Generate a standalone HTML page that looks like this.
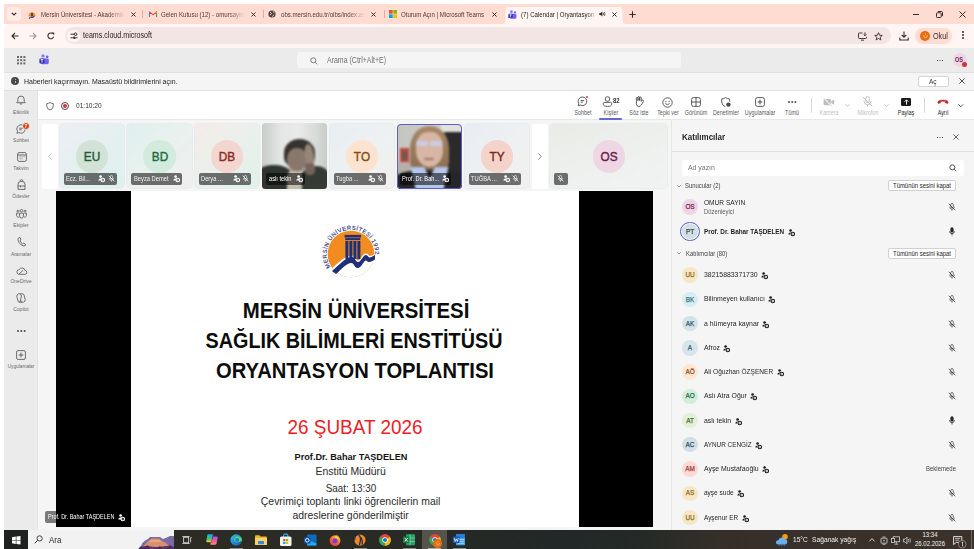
<!DOCTYPE html>
<html><head><meta charset="utf-8">
<style>
*{box-sizing:border-box}
html,body{margin:0;padding:0}
body{width:974px;height:549px;overflow:hidden;position:relative;background:#fff;font-family:"Liberation Sans",sans-serif;color:#242424}
.a{position:absolute}
.t{position:absolute;white-space:nowrap;line-height:0}
svg{position:absolute;overflow:visible}
</style></head><body>

<!-- ============ CHROME TAB STRIP ============ -->
<div class="a" style="left:4px;top:4px;width:970px;height:20px;background:#ffdcd1"></div>
<!-- tab list button -->
<div class="a" style="left:7px;top:7px;width:14px;height:14px;border-radius:4px;background:#ffece7"></div>
<svg style="left:11px;top:12px" width="6" height="4"><path d="M0.8 0.8 L3 3 L5.2 0.8" stroke="#3b2a28" stroke-width="1.2" fill="none"/></svg>


<!-- tab 1 -->
<svg style="left:28px;top:10.5px" width="8" height="8" viewBox="0 0 8 8"><path d="M.4 5.2A3.6 3.6 0 0 1 7.6 5.2z" fill="#f28a1a"/><rect x="3.2" y="1.8" width="1.6" height="3.6" fill="#2a3470"/><path d="M1.2 7.6Q2.4 5.6 3.6 6.2T6.4 5.2" stroke="#2a3470" stroke-width="1.1" fill="none"/></svg>
<div class="t" style="left:40.5px;top:14.8px;font-size:7.09px;color:#4a3b38;width:97.7px;overflow:hidden;height:10px;line-height:10px;margin-top:-5px;-webkit-mask-image:linear-gradient(90deg,#000 80%,transparent);transform:scaleX(0.86);transform-origin:0 0">Mersin Üniversitesi - Akademik</div>
<svg style="left:130.5px;top:11.5px" width="5" height="5"><path d="M0.5 0.5L4.5 4.5M4.5 0.5L0.5 4.5" stroke="#3b2a28" stroke-width="1"/></svg>
<div class="a" style="left:142px;top:10px;width:1px;height:8px;background:#f2a999"></div>
<!-- tab 2 -->
<svg style="left:148.5px;top:11px" width="8" height="6" viewBox="0 0 8 6"><path d="M0.5 6V1L4 3.6L7.5 1V6" fill="none" stroke="#ea4335" stroke-width="1.1"/><path d="M0.5 1.2V6" stroke="#4285f4" stroke-width="1.1"/><path d="M7.5 1.2V6" stroke="#34a853" stroke-width="1.1"/><path d="M6.2 2.2L7.5 1.1" stroke="#fbbc04" stroke-width="1.1"/></svg>
<div class="t" style="left:160.5px;top:14.8px;font-size:7.09px;color:#4a3b38;width:97.7px;overflow:hidden;height:10px;line-height:10px;margin-top:-5px;-webkit-mask-image:linear-gradient(90deg,#000 80%,transparent);transform:scaleX(0.86);transform-origin:0 0">Gelen Kutusu (12) - omursayin@</div>
<svg style="left:251.2px;top:11.5px" width="5" height="5"><path d="M0.5 0.5L4.5 4.5M4.5 0.5L0.5 4.5" stroke="#3b2a28" stroke-width="1"/></svg>
<div class="a" style="left:262.7px;top:10px;width:1px;height:8px;background:#f2a999"></div>
<!-- tab 3 -->
<svg style="left:268px;top:10px" width="8" height="8" viewBox="0 0 8 8"><circle cx="4" cy="4" r="3.6" fill="#4a4040"/><path d="M2 2.2q1.2 .3 1.5 1.5q-.3 1-1.4 1.1M5.2 1.4q.2 1.2 1.3 1.6M4.6 6.8q.1-1.5 1.6-1.9" stroke="#ffdcd1" stroke-width=".9" fill="none"/></svg>
<div class="t" style="left:280.6px;top:14.8px;font-size:7.09px;color:#4a3b38;width:97.7px;overflow:hidden;height:10px;line-height:10px;margin-top:-5px;-webkit-mask-image:linear-gradient(90deg,#000 80%,transparent);transform:scaleX(0.86);transform-origin:0 0">obs.mersin.edu.tr/oibs/index.aspx</div>
<svg style="left:371.1px;top:11.5px" width="5" height="5"><path d="M0.5 0.5L4.5 4.5M4.5 0.5L0.5 4.5" stroke="#3b2a28" stroke-width="1"/></svg>
<div class="a" style="left:383.8px;top:10px;width:1px;height:8px;background:#f2a999"></div>
<!-- tab 4 -->
<svg style="left:388.5px;top:10px" width="8" height="8" viewBox="0 0 8 8"><rect x="0" y="0" width="3.7" height="3.7" fill="#f25022"/><rect x="4.3" y="0" width="3.7" height="3.7" fill="#7fba00"/><rect x="0" y="4.3" width="3.7" height="3.7" fill="#00a4ef"/><rect x="4.3" y="4.3" width="3.7" height="3.7" fill="#ffb900"/></svg>
<div class="t" style="left:400.8px;top:14.8px;font-size:7.09px;color:#4a3b38;transform:scaleX(0.86);transform-origin:0 0">Oturum Açın | Microsoft Teams</div>
<svg style="left:491.5px;top:11.5px" width="5" height="5"><path d="M0.5 0.5L4.5 4.5M4.5 0.5L0.5 4.5" stroke="#3b2a28" stroke-width="1"/></svg>
<!-- active tab 5 -->
<svg style="left:502px;top:7px" width="124" height="17" viewBox="0 0 124 17"><path d="M0 17 Q3.5 17 3.5 13.5 V3.5 Q3.5 0 7 0 H117 Q120.5 0 120.5 3.5 V13.5 Q120.5 17 124 17z" fill="#fff6f3"/></svg>
<svg style="left:508px;top:9.6px" width="9" height="9" viewBox="0 0 10.5 10.5"><circle cx="4" cy="1.9" r="1.7" fill="#8a7cf4"/><circle cx="8.2" cy="2.8" r="1.35" fill="#6a62e8"/><rect x="5.6" y="4.4" width="4.2" height="5.8" rx="1.4" fill="#7d5cf0"/><rect x="2.2" y="4.4" width="5" height="5.8" rx="1.2" fill="#6a6cf0"/><rect x=".4" y="4.4" width="5.2" height="5" rx="1" fill="#3434b4"/><path d="M1.6 5.6h2.8M3 5.6v3" stroke="#fff" stroke-width=".8"/></svg>
<div class="t" style="left:521.3px;top:14.8px;font-size:7.09px;color:#2d2120;width:88.4px;overflow:hidden;height:10px;line-height:10px;margin-top:-5px;-webkit-mask-image:linear-gradient(90deg,#000 88%,transparent);transform:scaleX(0.86);transform-origin:0 0">(7) Calendar | Oryantasyon Toplantısı</div>
<svg style="left:598.5px;top:11px" width="7" height="6" viewBox="0 0 7 6"><path d="M0.3 2h1.3L3.4 0.5v5L1.6 4H0.3z" fill="#3b2a28"/><path d="M4.3 1.8q.7 1.2 0 2.4M5.4 1q1.3 2 0 4" stroke="#3b2a28" stroke-width=".7" fill="none"/></svg>
<svg style="left:611.8px;top:11.5px" width="5" height="5"><path d="M0.5 0.5L4.5 4.5M4.5 0.5L0.5 4.5" stroke="#3b2a28" stroke-width="1"/></svg>
<!-- new tab -->
<svg style="left:629px;top:11px" width="7" height="7"><path d="M3.5 0.3V6.7M0.3 3.5H6.7" stroke="#3b2a28" stroke-width="1.1"/></svg>
<!-- window controls -->
<div class="a" style="left:912.5px;top:13.6px;width:6px;height:1px;background:#3b2a28"></div>
<svg style="left:935.5px;top:10.5px" width="7" height="7" viewBox="0 0 7 7"><rect x="0.5" y="1.8" width="4.7" height="4.7" rx=".8" fill="none" stroke="#3b2a28" stroke-width="1"/><path d="M1.8 0.5h3.7a1 1 0 0 1 1 1v3.7" fill="none" stroke="#3b2a28" stroke-width="1"/></svg>
<svg style="left:959px;top:10.8px" width="7" height="7"><path d="M0.5 0.5L6.5 6.5M6.5 0.5L0.5 6.5" stroke="#3b2a28" stroke-width="1"/></svg>


<!-- ============ CHROME TOOLBAR ============ -->
<div class="a" style="left:4px;top:24px;width:970px;height:24px;background:#fff6f3;border-radius:5px 5px 0 0"></div>


<!-- back / fwd / reload -->
<svg style="left:11px;top:32px" width="8" height="8" viewBox="0 0 8 8"><path d="M7.5 4H1M4 1L1 4L4 7" stroke="#3b2a28" stroke-width="1.1" fill="none"/></svg>
<svg style="left:29px;top:32px" width="8" height="8" viewBox="0 0 8 8"><path d="M0.5 4H7M4 1L7 4L4 7" stroke="#a89896" stroke-width="1.1" fill="none"/></svg>
<svg style="left:47px;top:31.8px" width="8" height="8" viewBox="0 0 8 8"><path d="M6.6 4.6A2.9 2.9 0 1 1 5.6 1.6" stroke="#3b2a28" stroke-width="1.1" fill="none"/><path d="M4.4 0.4H7.2V3.2z" fill="#3b2a28"/></svg>
<!-- omnibox -->
<div class="a" style="left:64.5px;top:27.2px;width:826px;height:17px;border-radius:9px;background:#f2e5e4"></div>
<div class="a" style="left:67px;top:29.5px;width:13px;height:12.7px;border-radius:7px;background:#fff6f3"></div>
<svg style="left:69.5px;top:32px" width="8" height="8" viewBox="0 0 8 8"><path d="M0.5 2.2H4.5M0.5 5.8H2.8" stroke="#3b2a28" stroke-width="1"/><circle cx="5.6" cy="2.2" r="1.3" fill="none" stroke="#3b2a28" stroke-width="1"/><circle cx="4.3" cy="5.8" r="1.3" fill="#3b2a28"/><path d="M5.7 5.8H7.5" stroke="#3b2a28" stroke-width="1"/></svg>
<div class="t" style="left:83px;top:36px;font-size:8.26px;color:#261a19;transform:scaleX(0.86);transform-origin:0 0">teams.cloud.microsoft</div>
<!-- install / star -->
<svg style="left:857.5px;top:31.5px" width="10" height="9" viewBox="0 0 10 9"><path d="M4.5 1H1.2a.7.7 0 0 0-.7.7v4.1a.7.7 0 0 0 .7.7h6.6a.7.7 0 0 0 .7-.7V4.8" fill="none" stroke="#3b2a28" stroke-width=".9"/><path d="M3 8.2h3M7 0.3v3.4M5.6 2.3L7 3.7L8.4 2.3" stroke="#3b2a28" stroke-width=".9" fill="none"/></svg>
<svg style="left:874px;top:31.5px" width="9" height="9" viewBox="0 0 10 10"><path d="M5 0.8L6.2 3.6L9.2 3.8L6.9 5.8L7.6 8.8L5 7.2L2.4 8.8L3.1 5.8L0.8 3.8L3.8 3.6z" fill="none" stroke="#3b2a28" stroke-width="1"/></svg>
<!-- download -->
<svg style="left:899px;top:31px" width="10" height="10" viewBox="0 0 10 10"><path d="M5 0.5V6.2M2.6 3.8L5 6.2L7.4 3.8" stroke="#3b2a28" stroke-width="1.1" fill="none"/><path d="M0.8 6.5V9H9.2V6.5" stroke="#3b2a28" stroke-width="1.1" fill="none"/></svg>
<!-- profile pill -->
<div class="a" style="left:915px;top:27.5px;width:36.7px;height:16.6px;border-radius:9px;background:#fddcd2"></div>
<div class="a" style="left:919.8px;top:30.7px;width:10.2px;height:10.2px;border-radius:50%;background:#e86d0a"></div>
<svg style="left:922.5px;top:32.8px" width="5" height="6" viewBox="0 0 5 6"><path d="M2.5 0.4V1.6M1 2.2A1.7 1.7 0 1 0 4 2.2" stroke="#ffd8c4" stroke-width=".8" fill="none"/></svg>
<div class="t" style="left:932.8px;top:36px;font-size:8.37px;color:#3b2a28;transform:scaleX(0.86);transform-origin:0 0">Okul</div>
<!-- kebab -->
<div class="a" style="left:962px;top:31.2px;width:1.6px;height:1.6px;background:#3b2a28;border-radius:1px;box-shadow:0 3px 0 #3b2a28,0 6px 0 #3b2a28"></div>


<!-- ============ TEAMS HEADER ============ -->
<div class="a" style="left:4px;top:48px;width:970px;height:25px;background:#ebebeb;border-bottom:1px solid #e0e0e0"></div>

<!-- waffle -->
<div class="a" style="left:17.4px;top:56.4px;width:1.3px;height:1.3px;background:#6a6a6a;box-shadow:3.2px 0 #6a6a6a,6.4px 0 #6a6a6a,0 3.2px #6a6a6a,3.2px 3.2px #6a6a6a,6.4px 3.2px #6a6a6a,0 6.4px #6a6a6a,3.2px 6.4px #6a6a6a,6.4px 6.4px #6a6a6a"></div>
<!-- teams logo -->
<svg style="left:38.5px;top:54.3px" width="10.5" height="10.5" viewBox="0 0 10.5 10.5"><circle cx="4" cy="1.9" r="1.7" fill="#8a7cf4"/><circle cx="8.2" cy="2.8" r="1.35" fill="#6a62e8"/><rect x="5.6" y="4.4" width="4.2" height="5.8" rx="1.4" fill="#7d5cf0"/><rect x="2.2" y="4.4" width="5" height="5.8" rx="1.2" fill="#6a6cf0"/><rect x=".4" y="4.4" width="5.2" height="5" rx="1" fill="#3434b4"/><path d="M1.6 5.6h2.8M3 5.6v3" stroke="#fff" stroke-width=".8"/></svg>
<!-- search -->
<div class="a" style="left:296.5px;top:52.3px;width:384px;height:15.5px;border-radius:3px;background:#f5f5f5"></div>
<svg style="left:309.5px;top:56.6px" width="8" height="8" viewBox="0 0 8 8"><circle cx="3.3" cy="3.3" r="2.5" fill="none" stroke="#707070" stroke-width=".9"/><path d="M5.2 5.2L7.3 7.3" stroke="#707070" stroke-width=".9"/></svg>
<div class="t" style="left:326.8px;top:61.1px;font-size:8.14px;color:#707070;transform:scaleX(0.86);transform-origin:0 0">Arama (Ctrl+Alt+E)</div>
<!-- more + avatar -->
<div class="a" style="left:936.5px;top:59.5px;width:1.4px;height:1.4px;background:#424242;box-shadow:2.5px 0 #424242,5px 0 #424242"></div>
<div class="a" style="left:953px;top:53px;width:14px;height:14px;border-radius:50%;background:#eed5e5"></div>
<div class="t" style="left:955.2px;top:60px;font-size:6.51px;font-weight:700;color:#6b1e50;transform:scaleX(0.86);transform-origin:0 0">OS</div>
<div class="a" style="left:962px;top:62px;width:5px;height:5px;border-radius:50%;background:#d13438"></div>


<!-- ============ NOTIFICATION BAR ============ -->
<div class="a" style="left:4px;top:73px;width:970px;height:17.8px;background:#f5f5f5;border-bottom:1.2px solid #e0e0e0"></div>

<div class="a" style="left:11px;top:77.3px;width:8px;height:8px;border-radius:50%;background:#4a4a4a"></div>
<div class="a" style="left:14.6px;top:79.3px;width:1px;height:1px;background:#bbb"></div>
<div class="a" style="left:14.6px;top:80.8px;width:1px;height:2.6px;background:#bbb"></div>
<div class="t" style="left:24.3px;top:81.5px;font-size:8.09px;color:#1f1f1f;transform:scaleX(0.86);transform-origin:0 0">Haberleri kaçırmayın. Masaüstü bildirimlerini açın.</div>
<div class="a" style="left:918px;top:75.7px;width:31px;height:11.5px;border-radius:2px;background:#fff;border:1px solid #d6d6d6"></div>
<div class="t" style="left:929px;top:81.5px;font-size:7.56px;color:#333;transform:scaleX(0.86);transform-origin:0 0">Aç</div>
<svg style="left:958.7px;top:78.4px" width="6" height="6"><path d="M0.4 0.4L5.6 5.6M5.6 0.4L0.4 5.6" stroke="#424242" stroke-width=".9"/></svg>


<!-- ============ LEFT RAIL ============ -->
<div class="a" style="left:4px;top:90.8px;width:34px;height:439.2px;background:#ebebeb;border-right:.6px solid #e2e2e2"></div>

<style>.tc{position:absolute;white-space:nowrap;line-height:0;transform:translateX(-50%)}</style>
<!-- bell -->
<svg style="left:16.3px;top:95px" width="10" height="10" viewBox="0 0 10 10"><path d="M1.8 6.4V4.3a3.2 3.2 0 0 1 6.4 0v2.1L9.3 7.7H.7z" stroke="#5f5f5f" stroke-width=".9" fill="none" stroke-linejoin="round"/><path d="M3.8 8.6q1.2 1.2 2.4 0" stroke="#5f5f5f" stroke-width=".9" fill="none"/></svg>
<div class="tc" style="left:21.3px;top:111.5px;font-size:5.81px;color:#6a6a6a;transform:translateX(-50%) scaleX(0.86)">Etkinlik</div>
<!-- chat -->
<svg style="left:15.8px;top:123.5px" width="11" height="11" viewBox="0 0 11 11"><path d="M5 0.8a4.2 4.2 0 1 1-2.1 7.8L0.9 9.3l.6-2A4.2 4.2 0 0 1 5 .8z" stroke="#5f5f5f" stroke-width=".9" fill="none" stroke-linejoin="round"/><path d="M3.2 4.2h3.6M3.2 5.8h2.4" stroke="#5f5f5f" stroke-width=".9" fill="none"/></svg>
<div class="a" style="left:22.2px;top:121.5px;width:8px;height:8px;border-radius:50%;background:#d83b01;border:.8px solid #ebebeb"></div>
<div class="tc" style="left:26.2px;top:125.7px;font-size:5.81px;font-weight:700;color:#fff;transform:translateX(-50%) scaleX(0.86)">7</div>
<div class="tc" style="left:21px;top:140.2px;font-size:5.81px;color:#6a6a6a;transform:translateX(-50%) scaleX(0.86)">Sohbet</div>
<!-- calendar -->
<svg style="left:16.6px;top:152.4px" width="10" height="10" viewBox="0 0 10 10"><rect x="0.6" y="0.6" width="8.8" height="8.8" rx="1.6" stroke="#5f5f5f" stroke-width=".9" fill="none"/><path d="M0.6 3h8.8" stroke="#5f5f5f" stroke-width=".9" fill="none"/><path d="M2.6 4.8h1M4.6 4.8h1M6.6 4.8h1M2.6 6.8h1M4.6 6.8h1" stroke="#5f5f5f" stroke-width=".8"/></svg>
<div class="tc" style="left:21.3px;top:168.4px;font-size:5.81px;color:#6a6a6a;transform:translateX(-50%) scaleX(0.86)">Takvim</div>
<!-- backpack -->
<svg style="left:16.8px;top:180.2px" width="9" height="10" viewBox="0 0 9 10"><path d="M3 1.6V1.2a1.5 1.5 0 0 1 3 0v.4" stroke="#5f5f5f" stroke-width=".9" fill="none"/><path d="M1 9.4V4.2a2.6 2.6 0 0 1 2.6-2.6h1.8A2.6 2.6 0 0 1 8 4.2v5.2z" stroke="#5f5f5f" stroke-width=".9" fill="none" stroke-linejoin="round"/><path d="M1 6h7M3.5 6v1.3" stroke="#5f5f5f" stroke-width=".9" fill="none"/></svg>
<div class="tc" style="left:21.3px;top:196px;font-size:5.81px;color:#6a6a6a;transform:translateX(-50%) scaleX(0.86)">Ödevler</div>
<!-- teams -->
<svg style="left:15.6px;top:208.8px" width="11" height="10" viewBox="0 0 11 10"><circle cx="5.5" cy="1.6" r="1.2" stroke="#5f5f5f" stroke-width=".9" fill="none"/><circle cx="2" cy="2.2" r="1" stroke="#5f5f5f" stroke-width=".9" fill="none"/><circle cx="9" cy="2.2" r="1" stroke="#5f5f5f" stroke-width=".9" fill="none"/><path d="M3.6 4.2h3.8v3a1.9 1.9 0 0 1-3.8 0z" stroke="#5f5f5f" stroke-width=".9" fill="none"/><path d="M2.6 4.2H.6v2.3a1.6 1.6 0 0 0 2.4 1.4M8.4 4.2h2v2.3A1.6 1.6 0 0 1 8 7.9" stroke="#5f5f5f" stroke-width=".9" fill="none"/></svg>
<div class="tc" style="left:21.3px;top:225.2px;font-size:5.81px;color:#6a6a6a;transform:translateX(-50%) scaleX(0.86)">Ekipler</div>
<!-- phone -->
<svg style="left:16.8px;top:237.2px" width="9" height="10" viewBox="0 0 9 10"><path d="M1.9 0.7L3.2 0.6L4 2.7L3 3.6Q3.6 5.8 5.6 7L6.5 6.2L8.4 7.2L8.3 8.5Q6.8 9.8 4.4 8Q1.6 5.8 1 3Q.9 1.6 1.9 .7z" stroke="#5f5f5f" stroke-width=".9" fill="none" stroke-linejoin="round"/></svg>
<div class="tc" style="left:21.3px;top:253.5px;font-size:5.81px;color:#6a6a6a;transform:translateX(-50%) scaleX(0.86)">Aramalar</div>
<!-- onedrive -->
<svg style="left:15.8px;top:266.8px" width="11" height="8" viewBox="0 0 11 8"><path d="M2.6 7.3h6.2a1.9 1.9 0 0 0 .3-3.8A3.2 3.2 0 0 0 3.2 2.6 2.4 2.4 0 0 0 2.6 7.3z" stroke="#5f5f5f" stroke-width=".9" fill="none" stroke-linejoin="round"/><path d="M3.2 6.8l4-3.6" stroke="#5f5f5f" stroke-width=".9" fill="none"/></svg>
<div class="tc" style="left:21.3px;top:280.6px;font-size:5.81px;color:#6a6a6a;transform:translateX(-50%) scaleX(0.86)">OneDrive</div>
<!-- copilot -->
<svg style="left:16.3px;top:293px" width="10" height="10" viewBox="0 0 10 10"><path d="M3.2 0.8h3.4Q7.6 .8 7.9 1.8L9.2 6.4Q9.5 8.4 7.5 9.2H3.4Q2.4 9.2 2.1 8.2L.8 3.6Q.5 1.6 2.5 .8z" stroke="#5f5f5f" stroke-width=".9" fill="none" stroke-linejoin="round"/><path d="M4.2 1Q5.4 1.4 5.3 3L4.5 7.6Q4.3 9 3 9.2M5.9 9.1Q4.6 8.6 4.7 7.2" stroke="#5f5f5f" stroke-width=".9" fill="none"/></svg>
<div class="tc" style="left:21.3px;top:308.7px;font-size:5.81px;color:#6a6a6a;transform:translateX(-50%) scaleX(0.86)">Copilot</div>
<!-- more -->
<div class="a" style="left:16.9px;top:329.5px;width:2px;height:2px;background:#4a4a4a;border-radius:1px;box-shadow:3.3px 0 #4a4a4a,6.6px 0 #4a4a4a"></div>
<!-- apps -->
<svg style="left:16.3px;top:350.4px" width="10" height="10" viewBox="0 0 10 10"><rect x="0.6" y="0.6" width="8.8" height="8.8" rx="1.4" stroke="#5f5f5f" stroke-width=".9" fill="none"/><path d="M5 2.6v4.8M2.6 5h4.8" stroke="#5f5f5f" stroke-width="1"/></svg>
<div class="tc" style="left:21.3px;top:366.2px;font-size:5.52px;color:#6a6a6a;transform:translateX(-50%) scaleX(0.86)">Uygulamalar</div>


<!-- ============ MEETING TOOLBAR ============ -->
<div class="a" style="left:38px;top:90.8px;width:936px;height:29.6px;background:#fff;border-bottom:1px solid #e8e8e8"></div>

<!-- left: shield, record, time -->
<svg style="left:46px;top:101.8px" width="8" height="8.6" viewBox="0 0 9 10"><path d="M4.5 0.6Q6.4 1.9 8.3 1.9V4.8Q8.3 8 4.5 9.4Q.7 8 .7 4.8V1.9Q2.6 1.9 4.5.6z" stroke="#4a4a4a" stroke-width=".9" fill="none" stroke-linejoin="round"/></svg>
<div class="a" style="left:61.1px;top:101.9px;width:8px;height:8px;border-radius:50%;border:.9px solid #4a4a4a"></div>
<div class="a" style="left:62.9px;top:103.7px;width:4.4px;height:4.4px;border-radius:50%;background:#d13438"></div>
<div class="t" style="left:76.4px;top:106.3px;font-size:7.67px;color:#333;transform:scaleX(0.86);transform-origin:0 0">01:10:20</div>

<!-- Sohbet -->
<svg style="left:577px;top:96px" width="11" height="11" viewBox="0 0 11 11"><path d="M5.5 1a4.3 4.3 0 1 1-2.2 8L1.2 9.8l.6-2.1A4.3 4.3 0 0 1 5.5 1z" stroke="#4a4a4a" stroke-width=".9" fill="none" stroke-linejoin="round"/><path d="M3.6 4.6h3.6M3.6 6.2h2.2" stroke="#4a4a4a" stroke-width=".9" fill="none"/></svg>
<div class="a" style="left:585.6px;top:95.5px;width:2.9px;height:2.9px;border-radius:50%;background:#d13438"></div>
<div class="tc" style="left:582.6px;top:112.6px;font-size:6.3px;color:#5a5a5a;transform:translateX(-50%) scaleX(0.86)">Sohbet</div>

<!-- Kisiler -->
<svg style="left:601.5px;top:96px" width="11" height="11" viewBox="0 0 11 11"><circle cx="5.5" cy="3" r="2.3" stroke="#4a4a4a" stroke-width=".9" fill="none"/><path d="M1.3 7.6Q1.3 6.4 2.6 6.4h5.8q1.3 0 1.3 1.2v.6q0 2.2-4.2 2.2T1.3 8.2z" stroke="#4a4a4a" stroke-width=".9" fill="none"/></svg>
<div class="t" style="left:612.6px;top:101.2px;font-size:6.98px;font-weight:700;color:#333;transform:scaleX(0.86);transform-origin:0 0">82</div>
<div class="tc" style="left:610.8px;top:112.6px;font-size:6.3px;color:#5a5a5a;transform:translateX(-50%) scaleX(0.86)">Kişiler</div>

<div class="a" style="left:599px;top:118.4px;width:23px;height:1.3px;border-radius:1px;background:#6569d0"></div>
<!-- Soz iste hand -->
<svg style="left:634px;top:96px" width="10" height="11" viewBox="0 0 10 11"><path d="M2.4 5.2V2.2a.8.8 0 0 1 1.6 0V4.6V1.4a.8.8 0 0 1 1.6 0v3.2V1.8a.8.8 0 0 1 1.6 0v3.6L8 4.4a.9.9 0 0 1 1.4 1.1L7.3 9Q6.4 10.4 4.8 10.4 2.4 10.4 2.4 7.8z" stroke="#4a4a4a" stroke-width=".9" fill="none" stroke-linejoin="round"/></svg>
<div class="tc" style="left:639px;top:112.6px;font-size:6.3px;color:#5a5a5a;transform:translateX(-50%) scaleX(0.86)">Söz iste</div>

<!-- Tepki -->
<svg style="left:661.7px;top:96.5px" width="11" height="11" viewBox="0 0 11 11"><circle cx="5.5" cy="5.5" r="4.7" stroke="#4a4a4a" stroke-width=".9" fill="none"/><circle cx="3.9" cy="4.3" r=".6" fill="#4a4a4a"/><circle cx="7.1" cy="4.3" r=".6" fill="#4a4a4a"/><path d="M3.3 6.6q2.2 2 4.4 0" stroke="#4a4a4a" stroke-width=".9" fill="none"/></svg>
<div class="tc" style="left:667.6px;top:112.6px;font-size:6.3px;color:#5a5a5a;transform:translateX(-50%) scaleX(0.86)">Tepki ver</div>

<!-- Gorunum -->
<svg style="left:690.7px;top:96.7px" width="10" height="10" viewBox="0 0 10 10"><rect x=".6" y=".6" width="8.8" height="8.8" rx="1.8" stroke="#4a4a4a" stroke-width=".9" fill="none"/><path d="M5 .6v8.8M.6 5h8.8" stroke="#4a4a4a" stroke-width=".9" fill="none"/></svg>
<div class="tc" style="left:695.7px;top:112.6px;font-size:6.3px;color:#5a5a5a;transform:translateX(-50%) scaleX(0.86)">Görünüm</div>

<!-- Denetimler -->
<svg style="left:721px;top:96.5px" width="10" height="11" viewBox="0 0 10 11"><path d="M4.6 0.6Q6.6 1.9 8.6 1.9V4.6M4.4 9.8Q.7 8.3.7 5V1.9Q2.6 1.9 4.6.6" stroke="#4a4a4a" stroke-width=".9" fill="none" stroke-linejoin="round"/><circle cx="7.4" cy="7.6" r="2.2" fill="#4a4a4a"/></svg>
<div class="tc" style="left:725.9px;top:112.6px;font-size:6.3px;color:#5a5a5a;transform:translateX(-50%) scaleX(0.86)">Denetimler</div>

<!-- Uygulamalar -->
<svg style="left:755px;top:96.7px" width="10" height="10" viewBox="0 0 10 10"><rect x=".6" y=".6" width="8.8" height="8.8" rx="1.8" stroke="#4a4a4a" stroke-width=".9" fill="none"/><path d="M5 2.6v4.8M2.6 5h4.8" stroke="#4a4a4a" stroke-width="1"/></svg>
<div class="tc" style="left:760px;top:112.6px;font-size:6.3px;color:#5a5a5a;transform:translateX(-50%) scaleX(0.86)">Uygulamalar</div>

<!-- Tumu -->
<div class="a" style="left:788px;top:101px;width:1.6px;height:1.6px;background:#4a4a4a;border-radius:1px;box-shadow:3.2px 0 #4a4a4a,6.4px 0 #4a4a4a"></div>
<div class="tc" style="left:792px;top:112.6px;font-size:6.3px;color:#5a5a5a;transform:translateX(-50%) scaleX(0.86)">Tümü</div>

<!-- separator -->
<div class="a" style="left:810.5px;top:97.8px;width:.8px;height:15.5px;background:#d6d6d6"></div>
<!-- Kamera -->
<svg style="left:823px;top:96.5px" width="12" height="10" viewBox="0 0 12 10"><rect x=".6" y="2" width="7.2" height="6.2" rx="1.2" fill="#bdbdbd"/><path d="M8.2 4.2L11.2 2.4V7.8L8.2 6z" fill="#bdbdbd"/><path d="M.6 .8L9 9.4" stroke="#fff" stroke-width="1.3"/><path d="M.6 .8L9 9.4" stroke="#bdbdbd" stroke-width=".6"/></svg>
<div class="tc" style="left:829px;top:112.6px;font-size:6.3px;color:#c2c2c2;transform:translateX(-50%) scaleX(0.86)">Kamera</div>

<svg style="left:845.3px;top:104px" width="5" height="3"><path d="M.4 .4L2.5 2.4L4.6 .4" stroke="#bdbdbd" stroke-width=".9" fill="none"/></svg>
<!-- Mikrofon -->
<svg style="left:862px;top:96.2px" width="11" height="11" viewBox="0 0 11 11"><rect x="3.6" y=".6" width="3.8" height="6" rx="1.9" stroke="#bdbdbd" stroke-width=".9" fill="none"/><path d="M2 5.2a3.5 3.5 0 0 0 7 0M5.5 8.7v1.8" stroke="#bdbdbd" stroke-width=".9" fill="none"/><path d="M.8 .8L10.2 10.2" stroke="#bdbdbd" stroke-width=".9"/></svg>
<div class="tc" style="left:867.5px;top:112.6px;font-size:6.3px;color:#c2c2c2;transform:translateX(-50%) scaleX(0.86)">Mikrofon</div>

<svg style="left:883.7px;top:104px" width="5" height="3"><path d="M.4 .4L2.5 2.4L4.6 .4" stroke="#bdbdbd" stroke-width=".9" fill="none"/></svg>
<!-- Paylas -->
<div class="a" style="left:900.8px;top:97.8px;width:10.6px;height:8px;border-radius:1.3px;background:#1a1a1a"></div>
<svg style="left:903.5px;top:99px" width="5" height="6" viewBox="0 0 5 6"><path d="M2.5 5.6V1M.6 2.8L2.5 .8L4.4 2.8" stroke="#fff" stroke-width=".9" fill="none"/></svg>
<div class="tc" style="left:906px;top:112.6px;font-size:6.3px;color:#242424;transform:translateX(-50%) scaleX(0.86)">Paylaş</div>

<div class="a" style="left:923.5px;top:97.8px;width:.8px;height:15.5px;background:#d6d6d6"></div>
<!-- Ayril -->
<svg style="left:937px;top:99px" width="12" height="5" viewBox="0 0 12 5"><path d="M.8 3.6Q.6 1 6 1T11.2 3.6L10.8 4.4L8.4 3.9L8.3 2.6Q6 1.8 3.7 2.6L3.6 3.9L1.2 4.4z" fill="#c4262e" stroke="#c4262e" stroke-width=".5" stroke-linejoin="round"/></svg>
<div class="tc" style="left:942.9px;top:112.6px;font-size:6.3px;color:#242424;transform:translateX(-50%) scaleX(0.86)">Ayrıl</div>

<svg style="left:958.2px;top:104px" width="5.5" height="3.5"><path d="M.4 .4L2.75 2.8L5.1 .4" stroke="#4a4a4a" stroke-width=".9" fill="none"/></svg>


<!-- ============ STAGE ============ -->
<div class="a" style="left:38px;top:120px;width:633px;height:410px;background:#f5f5f5"></div>
<div class="a" style="left:41.5px;top:124px;width:16px;height:64.5px;border-radius:3px;background:#fff"></div>
<svg style="left:47.7px;top:152.5px" width="4" height="7"><path d="M3.5 .4L.6 3.5L3.5 6.6" stroke="#bdbdbd" stroke-width=".8" fill="none"/></svg>
<div class="a" style="left:59.7px;top:123.6px;width:64.8px;height:64.8px;border-radius:3.5px;background:linear-gradient(135deg,#eceef3 0%,#e4f0f0 55%,#dcf1ef 100%);box-shadow:0 0 0 .6px #dde4e4"></div>
<div class="a" style="left:75.8px;top:140px;width:32.6px;height:32.6px;border-radius:50%;background:#d2e2d6"></div>
<div class="tc" style="left:92.1px;top:156.5px;font-size:13.4px;color:#1f5a39;letter-spacing:.1px;-webkit-text-stroke:.45px #1f5a39;transform:translateX(-50%) scaleX(.88)">EU</div>
<div class="a" style="left:63.9px;top:172.9px;width:52.8px;height:11.9px;border-radius:2px;background:rgba(0,0,0,.55)"></div>
<div class="t" style="left:66.3px;top:179px;font-size:6.7px;color:#f2f2f2;width:38.1px;overflow:hidden;height:8px;line-height:8px;margin-top:-4px;transform:scaleX(0.86);transform-origin:0 0">Ecz. Bil...</div>
<svg style="left:98.2px;top:175.4px" width="7" height="7" viewBox="0 0 7 7"><circle cx="2.6" cy="1.5" r="1.35" fill="#fff"/><path d="M.3 5.6Q.3 3.5 2.5 3.5H3.2V5.6z" fill="#fff"/><circle cx="4.8" cy="5" r="1.75" fill="none" stroke="#fff" stroke-width="1.1"/><circle cx="4.8" cy="5" r=".6" fill="#ddd"/></svg>
<svg style="left:107.5px;top:175.4px" width="7" height="7" viewBox="0 0 7 7"><rect x="2.4" y=".4" width="2.2" height="3.6" rx="1.1" fill="none" stroke="#fff" stroke-width=".6"/><path d="M1.4 3.2a2.1 2.1 0 0 0 4.2 0M3.5 5.3v1.3" fill="none" stroke="#fff" stroke-width=".6"/><path d="M.6 .6L6.4 6.4" stroke="#fff" stroke-width=".7"/></svg>
<div class="a" style="left:127.2px;top:123.6px;width:64.8px;height:64.8px;border-radius:3.5px;background:linear-gradient(135deg,#dff0ee 0%,#e9f1ee 50%,#f1eeee 100%);box-shadow:0 0 0 .6px #dde4e4"></div>
<div class="a" style="left:143.3px;top:140px;width:32.6px;height:32.6px;border-radius:50%;background:#d3ebdc"></div>
<div class="tc" style="left:159.6px;top:156.5px;font-size:13.4px;color:#1f6b3f;letter-spacing:.1px;-webkit-text-stroke:.45px #1f6b3f;transform:translateX(-50%) scaleX(.88)">BD</div>
<div class="a" style="left:131.4px;top:172.9px;width:51px;height:11.9px;border-radius:2px;background:rgba(0,0,0,.55)"></div>
<div class="t" style="left:133.8px;top:179px;font-size:6.7px;color:#f2f2f2;width:46.5px;overflow:hidden;height:8px;line-height:8px;margin-top:-4px;transform:scaleX(0.86);transform-origin:0 0">Beyza Demet</div>
<svg style="left:172.9px;top:175.4px" width="7" height="7" viewBox="0 0 7 7"><circle cx="2.6" cy="1.5" r="1.35" fill="#fff"/><path d="M.3 5.6Q.3 3.5 2.5 3.5H3.2V5.6z" fill="#fff"/><circle cx="4.8" cy="5" r="1.75" fill="none" stroke="#fff" stroke-width="1.1"/><circle cx="4.8" cy="5" r=".6" fill="#ddd"/></svg>
<div class="a" style="left:194.7px;top:123.6px;width:64.8px;height:64.8px;border-radius:3.5px;background:linear-gradient(135deg,#f5ebe8 0%,#eaf0ec 50%,#dff1ea 100%);box-shadow:0 0 0 .6px #dde4e4"></div>
<div class="a" style="left:210.8px;top:140px;width:32.6px;height:32.6px;border-radius:50%;background:#f3d6d0"></div>
<div class="tc" style="left:227.1px;top:156.5px;font-size:13.4px;color:#8a2d1f;letter-spacing:.1px;-webkit-text-stroke:.45px #8a2d1f;transform:translateX(-50%) scaleX(.88)">DB</div>
<div class="a" style="left:198.9px;top:172.9px;width:52.6px;height:11.9px;border-radius:2px;background:rgba(0,0,0,.55)"></div>
<div class="t" style="left:201.3px;top:179px;font-size:6.7px;color:#f2f2f2;width:37.9px;overflow:hidden;height:8px;line-height:8px;margin-top:-4px;transform:scaleX(0.86);transform-origin:0 0">Derya ...</div>
<svg style="left:233.0px;top:175.4px" width="7" height="7" viewBox="0 0 7 7"><circle cx="2.6" cy="1.5" r="1.35" fill="#fff"/><path d="M.3 5.6Q.3 3.5 2.5 3.5H3.2V5.6z" fill="#fff"/><circle cx="4.8" cy="5" r="1.75" fill="none" stroke="#fff" stroke-width="1.1"/><circle cx="4.8" cy="5" r=".6" fill="#ddd"/></svg>
<svg style="left:242.3px;top:175.4px" width="7" height="7" viewBox="0 0 7 7"><rect x="2.4" y=".4" width="2.2" height="3.6" rx="1.1" fill="none" stroke="#fff" stroke-width=".6"/><path d="M1.4 3.2a2.1 2.1 0 0 0 4.2 0M3.5 5.3v1.3" fill="none" stroke="#fff" stroke-width=".6"/><path d="M.6 .6L6.4 6.4" stroke="#fff" stroke-width=".7"/></svg>
<div class="a" style="left:329.7px;top:123.6px;width:64.8px;height:64.8px;border-radius:3.5px;background:linear-gradient(135deg,#e8eef2 0%,#eef1f2 50%,#f2efee 100%);box-shadow:0 0 0 .6px #dde4e4"></div>
<div class="a" style="left:345.8px;top:140px;width:32.6px;height:32.6px;border-radius:50%;background:#fbe3cf"></div>
<div class="tc" style="left:362.1px;top:156.5px;font-size:13.4px;color:#8a4b14;letter-spacing:.1px;-webkit-text-stroke:.45px #8a4b14;transform:translateX(-50%) scaleX(.88)">TO</div>
<div class="a" style="left:333.9px;top:172.9px;width:52.6px;height:11.9px;border-radius:2px;background:rgba(0,0,0,.55)"></div>
<div class="t" style="left:336.3px;top:179px;font-size:6.7px;color:#f2f2f2;width:37.9px;overflow:hidden;height:8px;line-height:8px;margin-top:-4px;transform:scaleX(0.86);transform-origin:0 0">Tugba ...</div>
<svg style="left:368.0px;top:175.4px" width="7" height="7" viewBox="0 0 7 7"><circle cx="2.6" cy="1.5" r="1.35" fill="#fff"/><path d="M.3 5.6Q.3 3.5 2.5 3.5H3.2V5.6z" fill="#fff"/><circle cx="4.8" cy="5" r="1.75" fill="none" stroke="#fff" stroke-width="1.1"/><circle cx="4.8" cy="5" r=".6" fill="#ddd"/></svg>
<svg style="left:377.3px;top:175.4px" width="7" height="7" viewBox="0 0 7 7"><rect x="2.4" y=".4" width="2.2" height="3.6" rx="1.1" fill="none" stroke="#fff" stroke-width=".6"/><path d="M1.4 3.2a2.1 2.1 0 0 0 4.2 0M3.5 5.3v1.3" fill="none" stroke="#fff" stroke-width=".6"/><path d="M.6 .6L6.4 6.4" stroke="#fff" stroke-width=".7"/></svg>
<div class="a" style="left:464.7px;top:123.6px;width:64.8px;height:64.8px;border-radius:3.5px;background:linear-gradient(135deg,#e8ecf2 0%,#eef0f2 50%,#f2f0ef 100%);box-shadow:0 0 0 .6px #dde4e4"></div>
<div class="a" style="left:480.8px;top:140px;width:32.6px;height:32.6px;border-radius:50%;background:#f4d4ca"></div>
<div class="tc" style="left:497.1px;top:156.5px;font-size:13.4px;color:#7a2a18;letter-spacing:.1px;-webkit-text-stroke:.45px #7a2a18;transform:translateX(-50%) scaleX(.88)">TY</div>
<div class="a" style="left:468.9px;top:172.9px;width:52.4px;height:11.9px;border-radius:2px;background:rgba(0,0,0,.55)"></div>
<div class="t" style="left:471.3px;top:179px;font-size:6.7px;color:#f2f2f2;width:37.7px;overflow:hidden;height:8px;line-height:8px;margin-top:-4px;transform:scaleX(0.86);transform-origin:0 0">TUĞBA ...</div>
<svg style="left:502.8px;top:175.4px" width="7" height="7" viewBox="0 0 7 7"><circle cx="2.6" cy="1.5" r="1.35" fill="#fff"/><path d="M.3 5.6Q.3 3.5 2.5 3.5H3.2V5.6z" fill="#fff"/><circle cx="4.8" cy="5" r="1.75" fill="none" stroke="#fff" stroke-width="1.1"/><circle cx="4.8" cy="5" r=".6" fill="#ddd"/></svg>
<svg style="left:512.1px;top:175.4px" width="7" height="7" viewBox="0 0 7 7"><rect x="2.4" y=".4" width="2.2" height="3.6" rx="1.1" fill="none" stroke="#fff" stroke-width=".6"/><path d="M1.4 3.2a2.1 2.1 0 0 0 4.2 0M3.5 5.3v1.3" fill="none" stroke="#fff" stroke-width=".6"/><path d="M.6 .6L6.4 6.4" stroke="#fff" stroke-width=".7"/></svg>
<div class="a" style="left:261.9px;top:123.4px;width:65px;height:65.2px;border-radius:3.5px;overflow:hidden;background:linear-gradient(90deg,#c9cdca 0%,#e4e7e5 30%,#e8ebe9 55%,#d6dad7 85%,#c8ccc9 100%)">
<div class="a" style="filter:blur(1.1px);left:0;top:0;width:65px;height:66px">
<div class="a" style="left:22px;top:16px;width:31px;height:28px;border-radius:50% 50% 35% 35%;background:#35322f"></div>
<div class="a" style="left:25px;top:25px;width:20px;height:24px;border-radius:45% 45% 50% 50%;background:#8a776c"></div>
<div class="a" style="left:43px;top:21px;width:9px;height:25px;border-radius:45%;background:#978579;transform:rotate(-8deg)"></div>
<div class="a" style="left:-10px;top:42px;width:42px;height:30px;border-radius:50% 45% 0 0;background:#2f3430"></div>
<div class="a" style="left:38px;top:43px;width:32px;height:30px;border-radius:45% 50% 0 0;background:#363a35"></div>
<div class="a" style="left:25px;top:48px;width:15px;height:20px;background:#c4bcae;border-radius:30% 30% 0 0"></div>
<div class="a" style="left:43px;top:40px;width:10px;height:12px;border-radius:40%;background:#75665c"></div>
</div></div>
<div class="a" style="left:266.2px;top:172.9px;width:38.8px;height:11.9px;border-radius:2px;background:rgba(0,0,0,.55)"></div>
<div class="t" style="left:268.6px;top:179px;font-size:6.6px;color:#fff;transform:scaleX(0.86);transform-origin:0 0">aslı tekin</div>
<svg style="left:295.6px;top:175.4px" width="7" height="7" viewBox="0 0 7 7"><circle cx="2.6" cy="1.5" r="1.35" fill="#fff"/><path d="M.3 5.6Q.3 3.5 2.5 3.5H3.2V5.6z" fill="#fff"/><circle cx="4.8" cy="5" r="1.75" fill="none" stroke="#fff" stroke-width="1.1"/><circle cx="4.8" cy="5" r=".6" fill="#ddd"/></svg>
<div class="a" style="left:396.6px;top:123.5px;width:65.6px;height:65.4px;border-radius:4px;overflow:hidden;background:#c9c9c4">
<div class="a" style="filter:blur(1.3px);left:0;top:0;width:66px;height:66px">
<div class="a" style="left:0;top:0;width:66px;height:40px;background:linear-gradient(90deg,#c4c5c0,#d2d2cc)"></div>
<div class="a" style="left:44px;top:0;width:24px;height:9px;background:#e2e2da"></div>
<div class="a" style="left:43px;top:8px;width:25px;height:60px;border-radius:6px 0 0 0;background:#2a2a2a"></div>
<div class="a" style="left:3.5px;top:24px;width:9px;height:14px;background:#c8433a"></div>
<div class="a" style="left:5.5px;top:27px;width:5px;height:9px;background:#6a5a58"></div>
<div class="a" style="left:0;top:38px;width:14px;height:12px;background:#b5b1aa"></div>
<div class="a" style="left:13px;top:2px;width:39px;height:47px;border-radius:48% 48% 25% 25%;background:linear-gradient(#a88866,#8c6c50)"></div>
<div class="a" style="left:19px;top:8px;width:27px;height:35px;border-radius:42% 42% 48% 48%;background:#d8b6a5"></div>
<div class="a" style="left:19px;top:17.8px;width:12.5px;height:4.4px;border-radius:2px;background:#c8d0ee;opacity:.85"></div><div class="a" style="left:33px;top:17.8px;width:12.5px;height:4.4px;border-radius:2px;background:#c8d0ee;opacity:.85"></div>
<div class="a" style="left:27px;top:34px;width:10px;height:2.5px;border-radius:1px;background:#a07868"></div>
<div class="a" style="left:-6px;top:46px;width:78px;height:30px;border-radius:40% 40% 0 0;background:#26262a"></div>
<div class="a" style="left:14px;top:43px;width:38px;height:26px;background:#b4c6ea;clip-path:polygon(0 0,35% 0,50% 45%,65% 0,100% 0,85% 100%,15% 100%)"></div>
</div></div>
<div class="a" style="left:396.6px;top:123.5px;width:65.6px;height:65.4px;border-radius:4px;border:1.3px solid #5b5fc7"></div>
<div class="a" style="left:399.7px;top:172.9px;width:51.8px;height:11.9px;border-radius:2px;background:rgba(0,0,0,.55)"></div>
<div class="t" style="left:402px;top:179px;font-size:6.6px;color:#fff;transform:scaleX(0.86);transform-origin:0 0">Prof. Dr. Bah...</div>
<svg style="left:442px;top:175.4px" width="7" height="7" viewBox="0 0 7 7"><circle cx="2.6" cy="1.5" r="1.35" fill="#fff"/><path d="M.3 5.6Q.3 3.5 2.5 3.5H3.2V5.6z" fill="#fff"/><circle cx="4.8" cy="5" r="1.75" fill="none" stroke="#fff" stroke-width="1.1"/><circle cx="4.8" cy="5" r=".6" fill="#ddd"/></svg>
<div class="a" style="left:531.6px;top:124px;width:16px;height:64.5px;border-radius:3px;background:#fff"></div>
<svg style="left:537.7px;top:152.5px" width="4" height="7"><path d="M.5 .4L3.4 3.5L.5 6.6" stroke="#707070" stroke-width=".8" fill="none"/></svg>
<div class="a" style="left:549.6px;top:123.6px;width:117.6px;height:64.8px;border-radius:3.5px;background:linear-gradient(160deg,#e9ebe6 0%,#eef0ee 50%,#f1f3f3 100%);box-shadow:0 0 0 .6px #dde4e4"></div>
<div class="a" style="left:592.5px;top:140px;width:32.6px;height:32.6px;border-radius:50%;background:#eed6e5"></div>
<div class="tc" style="left:608.8px;top:156.5px;font-size:13.4px;color:#6b1e4f;letter-spacing:.1px;-webkit-text-stroke:.45px #6b1e4f;transform:translateX(-50%) scaleX(.88)">OS</div>
<div class="a" style="left:553.8px;top:172.9px;width:14px;height:11.9px;border-radius:2px;background:rgba(0,0,0,.55)"></div>
<svg style="left:557.3px;top:175.4px" width="7" height="7" viewBox="0 0 7 7"><rect x="2.4" y=".4" width="2.2" height="3.6" rx="1.1" fill="none" stroke="#fff" stroke-width=".6"/><path d="M1.4 3.2a2.1 2.1 0 0 0 4.2 0M3.5 5.3v1.3" fill="none" stroke="#fff" stroke-width=".6"/><path d="M.6 .6L6.4 6.4" stroke="#fff" stroke-width=".7"/></svg>


<div class="a" style="left:56px;top:191px;width:597px;height:336px;background:#000"></div>
<div class="a" style="left:131px;top:191px;width:447.5px;height:336px;background:#fff"></div>
<!-- logo -->
<svg style="left:318.7px;top:221.9px" width="66" height="56" viewBox="0 0 66 56">
<defs><clipPath id="cc"><circle cx="32" cy="32" r="23.3"/></clipPath></defs>
<g font-family="Liberation Sans" font-size="5.8" fill="#1f2f78" stroke="#1f2f78" stroke-width=".12"><text x="10.49" y="43.09" transform="rotate(242.7 10.49 43.09)" text-anchor="middle">M</text><text x="8.71" y="38.59" transform="rotate(254.2 8.71 38.59)" text-anchor="middle">E</text><text x="7.89" y="34.14" transform="rotate(264.9 7.89 34.14)" text-anchor="middle">R</text><text x="7.92" y="29.62" transform="rotate(275.6 7.92 29.62)" text-anchor="middle">S</text><text x="8.45" y="26.42" transform="rotate(283.3 8.45 26.42)" text-anchor="middle">İ</text><text x="9.46" y="23.18" transform="rotate(291.4 9.46 23.18)" text-anchor="middle">N</text><text x="12.79" y="17.28" transform="rotate(307.5 12.79 17.28)" text-anchor="middle">Ü</text><text x="15.99" y="13.85" transform="rotate(318.6 15.99 13.85)" text-anchor="middle">N</text><text x="18.69" y="11.79" transform="rotate(326.6 18.69 11.79)" text-anchor="middle">İ</text><text x="21.50" y="10.19" transform="rotate(334.3 21.50 10.19)" text-anchor="middle">V</text><text x="25.59" y="8.66" transform="rotate(344.6 25.59 8.66)" text-anchor="middle">E</text><text x="30.04" y="7.88" transform="rotate(355.4 30.04 7.88)" text-anchor="middle">R</text><text x="34.57" y="7.94" transform="rotate(366.1 34.57 7.94)" text-anchor="middle">S</text><text x="37.76" y="8.49" transform="rotate(373.8 37.76 8.49)" text-anchor="middle">İ</text><text x="40.69" y="9.41" transform="rotate(381.0 40.69 9.41)" text-anchor="middle">T</text><text x="44.46" y="11.26" transform="rotate(391.0 44.46 11.26)" text-anchor="middle">E</text><text x="47.99" y="13.83" transform="rotate(401.3 47.99 13.83)" text-anchor="middle">S</text><text x="50.27" y="16.13" transform="rotate(409.0 50.27 16.13)" text-anchor="middle">İ</text><text x="53.15" y="20.24" transform="rotate(420.9 53.15 20.24)" text-anchor="middle">1</text><text x="54.70" y="23.63" transform="rotate(429.8 54.70 23.63)" text-anchor="middle">9</text><text x="55.72" y="27.21" transform="rotate(438.6 55.72 27.21)" text-anchor="middle">9</text><text x="56.18" y="30.90" transform="rotate(447.4 56.18 30.90)" text-anchor="middle">2</text></g>
<g clip-path="url(#cc)">
<rect x="0" y="0" width="66" height="56" fill="#f28c1e"/>
<path d="M0 52 L11.5 47.5 C18.5 41.5 26 33.5 33 33.5 C36.5 33.5 37 38.5 39 38.5 C41.5 38.5 43.5 31.5 47 31.5 C49.5 31.5 50 34.5 51 34 C53 33.5 55 32.5 60 31 V56 H0z" fill="#fff"/>
</g>
<rect x="25.6" y="12.9" width="16.4" height="2.6" fill="#1f2f78"/>
<rect x="26.3" y="16.1" width="15" height="2" fill="#1f2f78"/>
<rect x="26.4" y="19" width="3" height="18" fill="#1f2f78"/>
<rect x="30.4" y="19" width="3" height="18" fill="#1f2f78"/>
<rect x="34.4" y="19" width="3" height="18" fill="#1f2f78"/>
<rect x="38.4" y="19" width="3" height="18" fill="#1f2f78"/>
<path d="M13 49 C20 43 27 35 33 35 C36 35 36.5 40 39 40 C42 40 44 33 47 33 C49 33 49.5 36 51 35.5 C53 35 54 34 56 33 L56 37.5 C54 38.5 52 40 50 40 C48 40 47.5 38 46.5 38.5 C44 40 42.5 46 38.5 46 C35.5 46 35 41 32.5 41 C27 41 22 48 17 52z" fill="#1f2f78"/>
</svg>
<!-- title -->
<div class="tc" style="left:356.1px;top:311.4px;font-size:22.2px;font-weight:700;color:#0d0d0d;transform:translateX(-50%) scaleX(.919)">MERSİN ÜNİVERSİTESİ</div>
<div class="tc" style="left:354.4px;top:340.7px;font-size:22.2px;font-weight:700;color:#0d0d0d;transform:translateX(-50%) scaleX(.892)">SAĞLIK BİLİMLERİ ENSTİTÜSÜ</div>
<div class="tc" style="left:354.9px;top:370.5px;font-size:22.2px;font-weight:700;color:#0d0d0d;transform:translateX(-50%) scaleX(.909)">ORYANTASYON TOPLANTISI</div>
<div class="tc" style="left:355.4px;top:426.5px;font-size:20.7px;color:#ee1c24;transform:translateX(-50%) scaleX(.915)">26 ŞUBAT 2026</div>
<div class="tc" style="left:351.4px;top:456.7px;font-size:9.6px;font-weight:700;color:#141414;transform:translateX(-50%) scaleX(.955)">Prof.Dr. Bahar TAŞDELEN</div>
<div class="tc" style="left:350.7px;top:471.6px;font-size:10.45px;color:#2a2a2a">Enstitü Müdürü</div>
<div class="tc" style="left:351px;top:488.3px;font-size:10.6px;color:#2a2a2a;transform:translateX(-50%) scaleX(.933)">Saat: 13:30</div>
<div class="tc" style="left:350.6px;top:502px;font-size:10.43px;color:#2a2a2a">Çevrimiçi toplantı linki öğrencilerin mail</div>
<div class="tc" style="left:350.6px;top:515.5px;font-size:10.43px;color:#2a2a2a">adreslerine gönderilmiştir</div>
<!-- presenter label -->
<div class="a" style="left:45px;top:511px;width:82px;height:11.6px;border-radius:2px;background:rgba(0,0,0,.5)"></div>
<div class="t" style="left:47.8px;top:517.3px;font-size:6.40px;color:#fff;transform:scaleX(0.86);transform-origin:0 0">Prof. Dr. Bahar TAŞDELEN</div>
<svg style="left:117.6px;top:514px" width="7" height="7" viewBox="0 0 7 7"><circle cx="2.6" cy="1.5" r="1.35" fill="#fff"/><path d="M.3 5.6Q.3 3.5 2.5 3.5H3.2V5.6z" fill="#fff"/><circle cx="4.8" cy="5" r="1.75" fill="none" stroke="#fff" stroke-width="1.1"/><circle cx="4.8" cy="5" r=".6" fill="#ddd"/></svg>


<!-- ============ PARTICIPANTS PANEL ============ -->
<div class="a" style="left:670.8px;top:120.4px;width:303.2px;height:409.6px;background:#f5f5f5;border-left:1px solid #e6e6e6"></div>

<div class="t" style="left:681.6px;top:137.2px;font-size:9.30px;font-weight:700;color:#242424;transform:scaleX(0.86);transform-origin:0 0">Katılımcılar</div>
<div class="a" style="left:936.7px;top:136.5px;width:1.4px;height:1.4px;background:#424242;box-shadow:2.5px 0 #424242,5px 0 #424242"></div>
<svg style="left:952.7px;top:134px" width="6" height="6"><path d="M.4 .4L5.6 5.6M5.6 .4L.4 5.6" stroke="#424242" stroke-width=".8"/></svg>
<div class="a" style="left:672px;top:151px;width:302px;height:.8px;background:#e0e0e0"></div>
<div class="a" style="left:681.6px;top:160.2px;width:282px;height:15.6px;border-radius:3px;background:#fff"></div>
<div class="t" style="left:688px;top:168.2px;font-size:8.02px;color:#707070;transform:scaleX(0.86);transform-origin:0 0">Ad yazın</div>
<svg style="left:949px;top:164.3px" width="8" height="8" viewBox="0 0 8 8"><circle cx="3.3" cy="3.3" r="2.5" fill="none" stroke="#424242" stroke-width=".9"/><path d="M5.2 5.2L7.3 7.3" stroke="#424242" stroke-width=".9"/></svg>
<svg style="left:676.8px;top:184.5px" width="4" height="3"><path d="M.3 .3L2 2L3.7 .3" stroke="#616161" stroke-width=".7" fill="none"/></svg>
<div class="t" style="left:685.4px;top:186.2px;font-size:6.86px;color:#424242;transform:scaleX(0.86);transform-origin:0 0">Sunucular (2)</div>
<div class="a" style="left:887.5px;top:179.6px;width:68px;height:11.9px;border-radius:2px;background:#fff;border:.8px solid #d1d1d1"></div>
<div class="tc" style="left:921.5px;top:185.8px;font-size:6.90px;color:#242424;transform:translateX(-50%) scaleX(0.86)">Tümünün sesini kapat</div>
<div class="a" style="left:682.2px;top:199.4px;width:15.6px;height:15.6px;border-radius:50%;background:#eed5e5"></div>
<div class="tc" style="left:690px;top:207.4px;font-size:7.44px;color:#6b1e50;transform:translateX(-50%) scaleX(0.86);-webkit-text-stroke:.25px #6b1e50">OS</div>
<div class="t" style="left:704.2px;top:203.3px;font-size:7.67px;color:#262626;transform:scaleX(0.86);transform-origin:0 0">OMUR SAYIN</div>
<div class="t" style="left:704.2px;top:212px;font-size:6.83px;color:#616161;transform:scaleX(0.86);transform-origin:0 0">Düzenleyici</div>
<svg style="left:948px;top:203.2px" width="8" height="8" viewBox="0 0 8 8"><rect x="2.7" y=".5" width="2.6" height="4.2" rx="1.3" fill="none" stroke="#424242" stroke-width=".7"/><path d="M1.6 3.7a2.4 2.4 0 0 0 4.8 0M4 6.1v1.5" fill="none" stroke="#424242" stroke-width=".7"/><path d="M.7 .7L7.3 7.3" stroke="#424242" stroke-width=".8"/></svg>
<div class="a" style="left:680.2px;top:221.6px;width:19.6px;height:19.6px;border-radius:50%;border:1px solid #5b5fc7"></div>
<div class="a" style="left:682.4px;top:223.8px;width:15.2px;height:15.2px;border-radius:50%;background:#d2dfe4"></div>
<div class="tc" style="left:690px;top:231.6px;font-size:7.44px;color:#2e4a55;transform:translateX(-50%) scaleX(0.86);-webkit-text-stroke:.25px #2e4a55">PT</div>
<div class="t" style="left:704.2px;top:231.6px;font-size:7.42px;font-weight:700;color:#242424;transform:scaleX(0.86);transform-origin:0 0">Prof. Dr. Bahar TAŞDELEN</div>
<svg style="left:787.7px;top:228.7px" width="7" height="7" viewBox="0 0 7 7"><circle cx="2.6" cy="1.5" r="1.35" fill="#1a1a1a"/><path d="M.3 5.6Q.3 3.5 2.5 3.5H3.2V5.6z" fill="#1a1a1a"/><circle cx="4.8" cy="5" r="2.5" fill="#f5f5f5"/><circle cx="4.8" cy="5" r="1.75" fill="none" stroke="#1a1a1a" stroke-width="1.1"/><circle cx="4.8" cy="5" r=".6" fill="#555"/></svg>
<svg style="left:948.8px;top:227.2px" width="6" height="9" viewBox="0 0 6 9"><rect x="1.4" y=".3" width="3.2" height="5.2" rx="1.6" fill="#242424"/><path d="M.6 4.2a2.4 2.4 0 0 0 4.8 0M3 6.7v1.8" stroke="#242424" stroke-width=".8" fill="none"/></svg>
<svg style="left:676.8px;top:252.3px" width="4" height="3"><path d="M.3 .3L2 2L3.7 .3" stroke="#616161" stroke-width=".7" fill="none"/></svg>
<div class="t" style="left:685.6px;top:253.9px;font-size:6.80px;color:#424242;transform:scaleX(0.86);transform-origin:0 0">Katılımcılar (80)</div>
<div class="a" style="left:887.5px;top:247.5px;width:68px;height:11.9px;border-radius:2px;background:#fff;border:.8px solid #d1d1d1"></div>
<div class="tc" style="left:921.5px;top:253.7px;font-size:6.90px;color:#242424;transform:translateX(-50%) scaleX(0.86)">Tümünün sesini kapat</div>
<div class="a" style="left:682.2px;top:267.0px;width:15.6px;height:15.6px;border-radius:50%;background:#f7e6c4"></div>
<div class="tc" style="left:690px;top:274.9px;font-size:7.44px;color:#8a6a1f;transform:translateX(-50%) scaleX(0.86);-webkit-text-stroke:.25px #8a6a1f">UU</div>
<div class="t nm" style="left:704.2px;top:274.8px;font-size:8.00px;color:#262626;transform:scaleX(0.86);transform-origin:0 0">38215883371730</div>
<svg style="left:948px;top:270.8px" width="8" height="8" viewBox="0 0 8 8"><rect x="2.7" y=".5" width="2.6" height="4.2" rx="1.3" fill="none" stroke="#424242" stroke-width=".7"/><path d="M1.6 3.7a2.4 2.4 0 0 0 4.8 0M4 6.1v1.5" fill="none" stroke="#424242" stroke-width=".7"/><path d="M.7 .7L7.3 7.3" stroke="#424242" stroke-width=".8"/></svg>
<div class="a" style="left:682.2px;top:291.6px;width:15.6px;height:15.6px;border-radius:50%;background:#d6edf1"></div>
<div class="tc" style="left:690px;top:299.5px;font-size:7.44px;color:#3a6f7a;transform:translateX(-50%) scaleX(0.86);-webkit-text-stroke:.25px #3a6f7a">BK</div>
<div class="t nm" style="left:704.2px;top:299.4px;font-size:8.00px;color:#262626;transform:scaleX(0.86);transform-origin:0 0">Bilinmeyen kullanıcı</div>
<svg style="left:948px;top:295.4px" width="8" height="8" viewBox="0 0 8 8"><rect x="2.7" y=".5" width="2.6" height="4.2" rx="1.3" fill="none" stroke="#424242" stroke-width=".7"/><path d="M1.6 3.7a2.4 2.4 0 0 0 4.8 0M4 6.1v1.5" fill="none" stroke="#424242" stroke-width=".7"/><path d="M.7 .7L7.3 7.3" stroke="#424242" stroke-width=".8"/></svg>
<div class="a" style="left:682.2px;top:315.8px;width:15.6px;height:15.6px;border-radius:50%;background:#d4e3ea"></div>
<div class="tc" style="left:690px;top:323.7px;font-size:7.44px;color:#2e5566;transform:translateX(-50%) scaleX(0.86);-webkit-text-stroke:.25px #2e5566">AK</div>
<div class="t nm" style="left:704.2px;top:323.6px;font-size:8.00px;color:#262626;transform:scaleX(0.86);transform-origin:0 0">a hümeyra kaynar</div>
<svg style="left:948px;top:319.6px" width="8" height="8" viewBox="0 0 8 8"><rect x="2.7" y=".5" width="2.6" height="4.2" rx="1.3" fill="none" stroke="#424242" stroke-width=".7"/><path d="M1.6 3.7a2.4 2.4 0 0 0 4.8 0M4 6.1v1.5" fill="none" stroke="#424242" stroke-width=".7"/><path d="M.7 .7L7.3 7.3" stroke="#424242" stroke-width=".8"/></svg>
<div class="a" style="left:682.2px;top:340.0px;width:15.6px;height:15.6px;border-radius:50%;background:#d6e5eb"></div>
<div class="tc" style="left:690px;top:347.9px;font-size:7.44px;color:#2e5566;transform:translateX(-50%) scaleX(0.86);-webkit-text-stroke:.25px #2e5566">A</div>
<div class="t nm" style="left:704.2px;top:347.8px;font-size:8.00px;color:#262626;transform:scaleX(0.86);transform-origin:0 0">Afroz</div>
<svg style="left:948px;top:343.8px" width="8" height="8" viewBox="0 0 8 8"><rect x="2.7" y=".5" width="2.6" height="4.2" rx="1.3" fill="none" stroke="#424242" stroke-width=".7"/><path d="M1.6 3.7a2.4 2.4 0 0 0 4.8 0M4 6.1v1.5" fill="none" stroke="#424242" stroke-width=".7"/><path d="M.7 .7L7.3 7.3" stroke="#424242" stroke-width=".8"/></svg>
<div class="a" style="left:682.2px;top:364.3px;width:15.6px;height:15.6px;border-radius:50%;background:#fde6d2"></div>
<div class="tc" style="left:690px;top:372.2px;font-size:7.44px;color:#8c4a18;transform:translateX(-50%) scaleX(0.86);-webkit-text-stroke:.25px #8c4a18">AÖ</div>
<div class="t nm" style="left:704.2px;top:372.1px;font-size:8.00px;color:#262626;transform:scaleX(0.818);transform-origin:0 0">Ali Oğuzhan ÖZŞENER</div>
<svg style="left:948px;top:368.1px" width="8" height="8" viewBox="0 0 8 8"><rect x="2.7" y=".5" width="2.6" height="4.2" rx="1.3" fill="none" stroke="#424242" stroke-width=".7"/><path d="M1.6 3.7a2.4 2.4 0 0 0 4.8 0M4 6.1v1.5" fill="none" stroke="#424242" stroke-width=".7"/><path d="M.7 .7L7.3 7.3" stroke="#424242" stroke-width=".8"/></svg>
<div class="a" style="left:682.2px;top:388.5px;width:15.6px;height:15.6px;border-radius:50%;background:#d3eddc"></div>
<div class="tc" style="left:690px;top:396.4px;font-size:7.44px;color:#1f6b3f;transform:translateX(-50%) scaleX(0.86);-webkit-text-stroke:.25px #1f6b3f">AO</div>
<div class="t nm" style="left:704.2px;top:396.3px;font-size:8.00px;color:#262626;transform:scaleX(0.86);transform-origin:0 0">Aslı Atra Oğur</div>
<svg style="left:948px;top:392.3px" width="8" height="8" viewBox="0 0 8 8"><rect x="2.7" y=".5" width="2.6" height="4.2" rx="1.3" fill="none" stroke="#424242" stroke-width=".7"/><path d="M1.6 3.7a2.4 2.4 0 0 0 4.8 0M4 6.1v1.5" fill="none" stroke="#424242" stroke-width=".7"/><path d="M.7 .7L7.3 7.3" stroke="#424242" stroke-width=".8"/></svg>
<div class="a" style="left:682.2px;top:412.8px;width:15.6px;height:15.6px;border-radius:50%;background:#e3efd9"></div>
<div class="tc" style="left:690px;top:420.7px;font-size:7.44px;color:#3e6b2a;transform:translateX(-50%) scaleX(0.86);-webkit-text-stroke:.25px #3e6b2a">AT</div>
<div class="t nm" style="left:704.2px;top:420.6px;font-size:8.00px;color:#262626;transform:scaleX(0.86);transform-origin:0 0">aslı tekin</div>
<svg style="left:948.8px;top:416.2px" width="6" height="9" viewBox="0 0 6 9"><rect x="1.4" y=".3" width="3.2" height="5.2" rx="1.6" fill="#242424"/><path d="M.6 4.2a2.4 2.4 0 0 0 4.8 0M3 6.7v1.8" stroke="#242424" stroke-width=".8" fill="none"/></svg>
<div class="a" style="left:682.2px;top:436.9px;width:15.6px;height:15.6px;border-radius:50%;background:#d2dfe6"></div>
<div class="tc" style="left:690px;top:444.8px;font-size:7.44px;color:#2e4a5a;transform:translateX(-50%) scaleX(0.86);-webkit-text-stroke:.25px #2e4a5a">AC</div>
<div class="t nm" style="left:704.2px;top:444.7px;font-size:8.00px;color:#262626;transform:scaleX(0.796);transform-origin:0 0">AYNUR CENGİZ</div>
<svg style="left:948px;top:440.7px" width="8" height="8" viewBox="0 0 8 8"><rect x="2.7" y=".5" width="2.6" height="4.2" rx="1.3" fill="none" stroke="#424242" stroke-width=".7"/><path d="M1.6 3.7a2.4 2.4 0 0 0 4.8 0M4 6.1v1.5" fill="none" stroke="#424242" stroke-width=".7"/><path d="M.7 .7L7.3 7.3" stroke="#424242" stroke-width=".8"/></svg>
<div class="a" style="left:682.2px;top:461.2px;width:15.6px;height:15.6px;border-radius:50%;background:#f9dad6"></div>
<div class="tc" style="left:690px;top:469.1px;font-size:7.44px;color:#a03a30;transform:translateX(-50%) scaleX(0.86);-webkit-text-stroke:.25px #a03a30">AM</div>
<div class="t nm" style="left:704.2px;top:469.0px;font-size:8.00px;color:#262626;transform:scaleX(0.86);transform-origin:0 0">Ayşe Mustafaoğlu</div>
<div class="t" style="left:926px;top:469.0px;font-size:6.98px;color:#424242;transform:scaleX(0.86);transform-origin:0 0">Beklemede</div>
<div class="a" style="left:682.2px;top:485.5px;width:15.6px;height:15.6px;border-radius:50%;background:#f7e6c4"></div>
<div class="tc" style="left:690px;top:493.4px;font-size:7.44px;color:#8a6a1f;transform:translateX(-50%) scaleX(0.86);-webkit-text-stroke:.25px #8a6a1f">AS</div>
<div class="t nm" style="left:704.2px;top:493.3px;font-size:8.00px;color:#262626;transform:scaleX(0.813);transform-origin:0 0">ayşe sude</div>
<svg style="left:948px;top:489.3px" width="8" height="8" viewBox="0 0 8 8"><rect x="2.7" y=".5" width="2.6" height="4.2" rx="1.3" fill="none" stroke="#424242" stroke-width=".7"/><path d="M1.6 3.7a2.4 2.4 0 0 0 4.8 0M4 6.1v1.5" fill="none" stroke="#424242" stroke-width=".7"/><path d="M.7 .7L7.3 7.3" stroke="#424242" stroke-width=".8"/></svg>
<div class="a" style="left:682.2px;top:509.8px;width:15.6px;height:15.6px;border-radius:50%;background:#f7e6c4"></div>
<div class="tc" style="left:690px;top:517.7px;font-size:7.44px;color:#8a6a1f;transform:translateX(-50%) scaleX(0.86);-webkit-text-stroke:.25px #8a6a1f">UU</div>
<div class="t nm" style="left:704.2px;top:517.6px;font-size:8.00px;color:#262626;transform:scaleX(0.8);transform-origin:0 0">Ayşenur ER</div>
<svg style="left:948px;top:513.6px" width="8" height="8" viewBox="0 0 8 8"><rect x="2.7" y=".5" width="2.6" height="4.2" rx="1.3" fill="none" stroke="#424242" stroke-width=".7"/><path d="M1.6 3.7a2.4 2.4 0 0 0 4.8 0M4 6.1v1.5" fill="none" stroke="#424242" stroke-width=".7"/><path d="M.7 .7L7.3 7.3" stroke="#424242" stroke-width=".8"/></svg>


<svg style="left:760.9px;top:271.8px" width="7" height="7" viewBox="0 0 7 7"><circle cx="2.6" cy="1.5" r="1.35" fill="#1a1a1a"/><path d="M.3 5.6Q.3 3.5 2.5 3.5H3.2V5.6z" fill="#1a1a1a"/><circle cx="4.8" cy="5" r="2.5" fill="#f5f5f5"/><circle cx="4.8" cy="5" r="1.75" fill="none" stroke="#1a1a1a" stroke-width="1.1"/><circle cx="4.8" cy="5" r=".6" fill="#555"/></svg>
<svg style="left:768.2px;top:296.4px" width="7" height="7" viewBox="0 0 7 7"><circle cx="2.6" cy="1.5" r="1.35" fill="#1a1a1a"/><path d="M.3 5.6Q.3 3.5 2.5 3.5H3.2V5.6z" fill="#1a1a1a"/><circle cx="4.8" cy="5" r="2.5" fill="#f5f5f5"/><circle cx="4.8" cy="5" r="1.75" fill="none" stroke="#1a1a1a" stroke-width="1.1"/><circle cx="4.8" cy="5" r=".6" fill="#555"/></svg>
<svg style="left:762.4px;top:320.6px" width="7" height="7" viewBox="0 0 7 7"><circle cx="2.6" cy="1.5" r="1.35" fill="#1a1a1a"/><path d="M.3 5.6Q.3 3.5 2.5 3.5H3.2V5.6z" fill="#1a1a1a"/><circle cx="4.8" cy="5" r="2.5" fill="#f5f5f5"/><circle cx="4.8" cy="5" r="1.75" fill="none" stroke="#1a1a1a" stroke-width="1.1"/><circle cx="4.8" cy="5" r=".6" fill="#555"/></svg>
<svg style="left:723.4px;top:344.8px" width="7" height="7" viewBox="0 0 7 7"><circle cx="2.6" cy="1.5" r="1.35" fill="#1a1a1a"/><path d="M.3 5.6Q.3 3.5 2.5 3.5H3.2V5.6z" fill="#1a1a1a"/><circle cx="4.8" cy="5" r="2.5" fill="#f5f5f5"/><circle cx="4.8" cy="5" r="1.75" fill="none" stroke="#1a1a1a" stroke-width="1.1"/><circle cx="4.8" cy="5" r=".6" fill="#555"/></svg>
<svg style="left:776.5px;top:369.1px" width="7" height="7" viewBox="0 0 7 7"><circle cx="2.6" cy="1.5" r="1.35" fill="#1a1a1a"/><path d="M.3 5.6Q.3 3.5 2.5 3.5H3.2V5.6z" fill="#1a1a1a"/><circle cx="4.8" cy="5" r="2.5" fill="#f5f5f5"/><circle cx="4.8" cy="5" r="1.75" fill="none" stroke="#1a1a1a" stroke-width="1.1"/><circle cx="4.8" cy="5" r=".6" fill="#555"/></svg>
<svg style="left:750.2px;top:393.3px" width="7" height="7" viewBox="0 0 7 7"><circle cx="2.6" cy="1.5" r="1.35" fill="#1a1a1a"/><path d="M.3 5.6Q.3 3.5 2.5 3.5H3.2V5.6z" fill="#1a1a1a"/><circle cx="4.8" cy="5" r="2.5" fill="#f5f5f5"/><circle cx="4.8" cy="5" r="1.75" fill="none" stroke="#1a1a1a" stroke-width="1.1"/><circle cx="4.8" cy="5" r=".6" fill="#555"/></svg>
<svg style="left:734.5px;top:417.6px" width="7" height="7" viewBox="0 0 7 7"><circle cx="2.6" cy="1.5" r="1.35" fill="#1a1a1a"/><path d="M.3 5.6Q.3 3.5 2.5 3.5H3.2V5.6z" fill="#1a1a1a"/><circle cx="4.8" cy="5" r="2.5" fill="#f5f5f5"/><circle cx="4.8" cy="5" r="1.75" fill="none" stroke="#1a1a1a" stroke-width="1.1"/><circle cx="4.8" cy="5" r=".6" fill="#555"/></svg>
<svg style="left:755.0px;top:441.7px" width="7" height="7" viewBox="0 0 7 7"><circle cx="2.6" cy="1.5" r="1.35" fill="#1a1a1a"/><path d="M.3 5.6Q.3 3.5 2.5 3.5H3.2V5.6z" fill="#1a1a1a"/><circle cx="4.8" cy="5" r="2.5" fill="#f5f5f5"/><circle cx="4.8" cy="5" r="1.75" fill="none" stroke="#1a1a1a" stroke-width="1.1"/><circle cx="4.8" cy="5" r=".6" fill="#555"/></svg>
<svg style="left:761.9px;top:466.0px" width="7" height="7" viewBox="0 0 7 7"><circle cx="2.6" cy="1.5" r="1.35" fill="#1a1a1a"/><path d="M.3 5.6Q.3 3.5 2.5 3.5H3.2V5.6z" fill="#1a1a1a"/><circle cx="4.8" cy="5" r="2.5" fill="#f5f5f5"/><circle cx="4.8" cy="5" r="1.75" fill="none" stroke="#1a1a1a" stroke-width="1.1"/><circle cx="4.8" cy="5" r=".6" fill="#555"/></svg>
<svg style="left:737.0px;top:490.3px" width="7" height="7" viewBox="0 0 7 7"><circle cx="2.6" cy="1.5" r="1.35" fill="#1a1a1a"/><path d="M.3 5.6Q.3 3.5 2.5 3.5H3.2V5.6z" fill="#1a1a1a"/><circle cx="4.8" cy="5" r="2.5" fill="#f5f5f5"/><circle cx="4.8" cy="5" r="1.75" fill="none" stroke="#1a1a1a" stroke-width="1.1"/><circle cx="4.8" cy="5" r=".6" fill="#555"/></svg>
<svg style="left:741.5px;top:514.6px" width="7" height="7" viewBox="0 0 7 7"><circle cx="2.6" cy="1.5" r="1.35" fill="#1a1a1a"/><path d="M.3 5.6Q.3 3.5 2.5 3.5H3.2V5.6z" fill="#1a1a1a"/><circle cx="4.8" cy="5" r="2.5" fill="#f5f5f5"/><circle cx="4.8" cy="5" r="1.75" fill="none" stroke="#1a1a1a" stroke-width="1.1"/><circle cx="4.8" cy="5" r=".6" fill="#555"/></svg>
<!-- ============ TASKBAR ============ -->
<div class="a" style="left:4px;top:530px;width:970px;height:19px;background:linear-gradient(90deg,#2e2d24 0%,#2d2c24 18%,#292a25 40%,#212827 58%,#252a27 66%,#362f29 74%,#3c322b 100%)"></div>

<!-- start -->
<div class="a" style="left:4px;top:530px;width:24px;height:19px;background:#1f2020"></div>
<svg style="left:12.3px;top:535.8px" width="8.5" height="8.5" viewBox="0 0 8.5 8.5"><path d="M0 1.2L3.8 .6V4H0zM4.4 .5L8.5 0V4H4.4zM0 4.5H3.8V7.9L0 7.3zM4.4 4.5H8.5V8.5L4.4 8z" fill="#fff"/></svg>
<!-- search box -->
<div class="a" style="left:28px;top:530px;width:146px;height:19px;background:#f2f2f2"></div>
<svg style="left:34.2px;top:535.2px" width="9" height="9" viewBox="0 0 9 9"><circle cx="5.6" cy="3.4" r="2.6" fill="none" stroke="#333" stroke-width=".9"/><path d="M3.7 5.3L.7 8.3" stroke="#333" stroke-width="1"/></svg>
<div class="t" style="left:48.8px;top:540.2px;font-size:9.30px;color:#2a2a2a;transform:scaleX(0.86);transform-origin:0 0">Ara</div>
<svg style="left:136px;top:534px" width="38" height="15" viewBox="0 0 38 15">
<path d="M4 15 Q6 7 12 5 L14 3 H24 L27 5 Q30 4 34 2 L38 2 V15z" fill="#7a6aa8"/>
<path d="M6 15 Q9 9 14 6 L16 4.5 H23 L26 7 Q30 8 33 12 L36 15z" fill="#d89070"/>
<path d="M14 6 H24 L25 8 H13z" fill="#e8a878"/>
<path d="M3 15 Q8 11 12 12 T20 13 T30 12 T38 13 V15z" fill="#5a3a6a"/>
<path d="M2 15 L5 12 L8 14 L12 11 L14 15z M20 15 L24 12 L27 15z M30 15 L34 11 L37 15z" fill="#4a2a5a"/>
</svg>
<!-- active chrome highlight -->
<div class="a" style="left:422.4px;top:530px;width:24.6px;height:19px;background:#55534b"></div>
<!-- task view -->
<svg style="left:181.5px;top:535.8px" width="9.5" height="8" viewBox="0 0 9.5 8"><rect x="1.6" y="1.3" width="5" height="5.4" fill="none" stroke="#d0d0d0" stroke-width=".9"/><path d="M.4 .5h7.2M.4 7.5h7.2M8.6 1.5v5M9.2 1v.8" stroke="#d0d0d0" stroke-width=".9"/></svg>
<!-- copilot -->
<svg style="left:205.8px;top:534.4px" width="12" height="11" viewBox="0 0 12 11"><defs><linearGradient id="cp1" x1="0" y1="0" x2="0" y2="1"><stop offset="0" stop-color="#1aa8f4"/><stop offset=".55" stop-color="#40c070"/><stop offset="1" stop-color="#f4d020"/></linearGradient><linearGradient id="cp2" x1="0" y1="0" x2="0" y2="1"><stop offset="0" stop-color="#b04cf4"/><stop offset=".6" stop-color="#f05a9a"/><stop offset="1" stop-color="#f89a50"/></linearGradient></defs><path d="M2.4.3h4.6L5.2 8.3H1.3Q.1 8.3.3 7.1L1.2 1.4Q1.4.3 2.4.3z" fill="url(#cp1)"/><path d="M6.4.3h1.2L6.9 3z" fill="#1e60e0"/><path d="M7.2 2.6h3.3q1.3 0 1.1 1.3L10.6 9.6Q10.4 10.7 9.2 10.7H4.4z" fill="url(#cp2)"/><path d="M5.2 8.3L4.4 10.7L3.8 9z" fill="#f04030"/></svg>
<!-- edge -->
<svg style="left:230px;top:534.2px" width="12.5" height="12" viewBox="0 0 12.5 12"><defs><linearGradient id="ed" x1="0" y1="0" x2="1" y2="1"><stop offset="0" stop-color="#35c1f1"/><stop offset=".6" stop-color="#1b7fd6"/><stop offset="1" stop-color="#0c59a4"/></linearGradient></defs><circle cx="6.2" cy="6" r="5.8" fill="url(#ed)"/><path d="M12 6.4Q12 3 8.6 2.4Q4.6 2 4 5.8Q4.2 8 6.6 8.4Q9 8.6 12 6.4z" fill="#5fd36a"/><circle cx="7.2" cy="6" r="2" fill="#1b7fd6"/></svg>
<!-- explorer -->
<svg style="left:255px;top:535px" width="12" height="10" viewBox="0 0 12 10"><path d="M0 1.2Q0 .2 1 .2h3.4l1.2 1.2H11q1 0 1 1V9q0 1-1 1H1Q0 10 0 9z" fill="#e8b830"/><path d="M0 3h12v6q0 1-1 1H1Q0 10 0 9z" fill="#f8d468"/><rect x="3" y="6" width="6" height="3.2" fill="#3a8ad8"/></svg>
<!-- store -->
<svg style="left:279.5px;top:534px" width="11.5" height="12" viewBox="0 0 11.5 12"><path d="M3.5 3V2a2.2 2.2 0 0 1 4.4 0v1" stroke="#28a8e8" stroke-width="1.2" fill="none"/><rect x="0" y="2.6" width="11.5" height="9.4" rx="1.5" fill="#f4f4f4"/><rect x="3.2" y="5" width="2.2" height="2.2" fill="#f25022"/><rect x="6" y="5" width="2.2" height="2.2" fill="#7fba00"/><rect x="3.2" y="7.8" width="2.2" height="2.2" fill="#00a4ef"/><rect x="6" y="7.8" width="2.2" height="2.2" fill="#ffb900"/></svg>
<!-- outlook -->
<svg style="left:304px;top:534px" width="12.5" height="12" viewBox="0 0 12.5 12"><rect x="3" y="0.5" width="9.5" height="11" rx="1" fill="#0f6cbd"/><path d="M3 5.5L12.5 9.5V11.5H3z" fill="#28a8ea"/><rect x="0" y="3" width="6.5" height="6.5" rx="1" fill="#0a4f9e"/><circle cx="3.25" cy="6.25" r="1.8" fill="none" stroke="#fff" stroke-width=".9"/></svg>
<!-- firefox -->
<svg style="left:329.4px;top:534px" width="12" height="12" viewBox="0 0 12 12"><defs><radialGradient id="ff" cx=".7" cy=".2" r="1"><stop offset="0" stop-color="#ffe040"/><stop offset=".45" stop-color="#ff7a20"/><stop offset="1" stop-color="#e02060"/></radialGradient></defs><circle cx="6" cy="6.6" r="5.4" fill="url(#ff)"/><circle cx="6" cy="6.8" r="2.6" fill="#7a3ad8"/><path d="M7.5 .4Q10 2 9.6 4.4L8 3z" fill="#ffb020"/></svg>
<!-- mersin/other -->
<svg style="left:354.2px;top:534px" width="12" height="12" viewBox="0 0 12 12"><circle cx="6" cy="6" r="5.6" fill="#f08a1c"/><path d="M5 1.2q2 2 1.4 5.4L5.4 11M6.4 3.2q2.2 2 1.8 7.4" stroke="#1e2a6a" stroke-width="1.3" fill="none"/><path d="M.6 6.4Q.6 1 5 .6" stroke="#1e2a6a" stroke-width="1" fill="none"/></svg>
<!-- chrome -->
<svg style="left:378.6px;top:534px" width="12" height="12" viewBox="-6 -6 12 12"><circle r="5.8" fill="#34a853"/><path d="M0 0L5.02 -2.9A5.8 5.8 0 0 0 -5.02 -2.9z" fill="#ea4335"/><path d="M0 0L-5.02 -2.9A5.8 5.8 0 0 0 0 5.8z" fill="#34a853"/><path d="M0 0L0 5.8A5.8 5.8 0 0 0 5.02 -2.9z" fill="#fbbc04"/><circle r="2.7" fill="#fff"/><circle r="2.1" fill="#1a73e8"/></svg>
<!-- excel -->
<svg style="left:403px;top:534.3px" width="12" height="11.5" viewBox="0 0 12 11.5"><rect x="3" y=".3" width="9" height="11" rx=".8" fill="#21a366"/><path d="M7 .3v11M3 4h9M3 7.6h9" stroke="#a6e0bf" stroke-width=".6"/><rect x="0" y="2.5" width="6.5" height="6.5" rx=".8" fill="#107c41"/><path d="M1.6 3.9L4.9 7.6M4.9 3.9L1.6 7.6" stroke="#fff" stroke-width=".9"/></svg>
<!-- chrome active -->
<svg style="left:428.5px;top:534px" width="12" height="12" viewBox="-6 -6 12 12"><circle r="5.8" fill="#34a853"/><path d="M0 0L5.02 -2.9A5.8 5.8 0 0 0 -5.02 -2.9z" fill="#ea4335"/><path d="M0 0L0 5.8A5.8 5.8 0 0 0 5.02 -2.9z" fill="#fbbc04"/><circle r="2.7" fill="#fff"/><circle r="2.1" fill="#1a73e8"/></svg>
<div class="a" style="left:433.2px;top:539.3px;width:8.6px;height:8.6px;border-radius:50%;background:#e96d0c"></div>
<svg style="left:435.7px;top:541.4px" width="4" height="5" viewBox="0 0 4 5"><path d="M2 .3v1M.8 1.8a1.4 1.4 0 1 0 2.4 0" stroke="#ffd8c4" stroke-width=".7" fill="none"/></svg>
<!-- word -->
<svg style="left:453px;top:534.3px" width="12" height="11.5" viewBox="0 0 12 11.5"><rect x="3" y=".3" width="9" height="11" rx=".8" fill="#41a5ee"/><path d="M3 .3h9v3.7H3z" fill="#2b7cd3"/><path d="M5 5.5h6M5 7.5h6M5 9.5h6" stroke="#d0e6fa" stroke-width=".6"/><rect x="0" y="2.5" width="6.5" height="6.5" rx=".8" fill="#185abd"/><path d="M1.2 4L2.1 7.5L3.2 4.8L4.3 7.5L5.3 4" stroke="#fff" stroke-width=".7" fill="none"/></svg>
<!-- running indicators -->
<div class="a" style="left:230px;top:548px;width:13px;height:1px;background:#8a8880"></div>
<div class="a" style="left:354px;top:548px;width:13px;height:1px;background:#8a8880"></div>
<div class="a" style="left:403px;top:548px;width:13px;height:1px;background:#8a8880"></div>
<div class="a" style="left:428px;top:548px;width:13px;height:1px;background:#b0aea6"></div>
<div class="a" style="left:453px;top:548px;width:13px;height:1px;background:#8a8880"></div>
<!-- weather -->
<svg style="left:775.5px;top:533px" width="13" height="13" viewBox="0 0 13 13"><circle cx="9" cy="3.8" r="2.8" fill="#f49a1a"/><path d="M1.8 11.5H8.6a2.6 2.6 0 0 0 .2-5.2A3.4 3.4 0 0 0 2.4 7.3 2.1 2.1 0 0 0 1.8 11.5z" fill="#6ab0f0"/><path d="M3 12.8L4 10.8M5.6 12.8L6.6 10.8M8.2 12.8L9.2 10.8" stroke="#3a80e0" stroke-width="1"/></svg>
<div class="t" style="left:792.5px;top:540.2px;font-size:7.67px;color:#f2f2f2;transform:scaleX(0.86);transform-origin:0 0">15°C</div>
<div class="t" style="left:812px;top:540.2px;font-size:7.79px;color:#f2f2f2;transform:scaleX(0.86);transform-origin:0 0">Sağanak yağış</div>
<svg style="left:868.5px;top:538.2px" width="6" height="4"><path d="M.4 3.4L3 .6L5.6 3.4" stroke="#e8e8e8" stroke-width=".9" fill="none"/></svg>
<svg style="left:880px;top:535.5px" width="8" height="9" viewBox="0 0 8 9"><rect x="1" y="2.2" width="6" height="5" rx=".6" fill="none" stroke="#d8d8d8" stroke-width=".8"/><path d="M2.5 1h3M2.5 8.3h3M3 4.7h2" stroke="#d8d8d8" stroke-width=".8"/></svg>
<svg style="left:891.2px;top:535.5px" width="9" height="9" viewBox="0 0 9 9"><rect x="2.2" y=".8" width="6.2" height="5" fill="none" stroke="#d8d8d8" stroke-width=".8"/><rect x=".4" y="2.4" width="3" height="4" fill="#2d2b22" stroke="#d8d8d8" stroke-width=".8"/><path d="M5.3 5.8v2M3.6 8.2h3.4" stroke="#d8d8d8" stroke-width=".8"/></svg>
<svg style="left:903.2px;top:535.5px" width="8" height="9" viewBox="0 0 8 9"><path d="M.4 3.2h1.6L4 1.2v6.6L2 5.8H.4z" fill="none" stroke="#d8d8d8" stroke-width=".8"/><path d="M5.4 3q.8 1.5 0 3M6.8 2.2q1.3 2.3 0 4.6" stroke="#d8d8d8" stroke-width=".7" fill="none"/></svg>
<div class="tc" style="left:930.3px;top:535.3px;font-size:6.98px;color:#f2f2f2;transform:translateX(-50%) scaleX(0.86)">13:34</div>
<div class="tc" style="left:930.3px;top:544.3px;font-size:6.98px;color:#f2f2f2;transform:translateX(-50%) scaleX(0.86)">26.02.2026</div>
<svg style="left:952.5px;top:535.5px" width="14" height="13" viewBox="0 0 14 13"><path d="M.6 .6h8.2v5.8H3.2L.6 8.6z" fill="none" stroke="#f0f0f0" stroke-width=".9"/><path d="M2.2 2.4h5M2.2 4.2h4" stroke="#f0f0f0" stroke-width=".7"/><circle cx="9.2" cy="8.2" r="3.8" fill="#2d2b22" stroke="#a8a8a0" stroke-width=".7"/><path d="M8.6 6.6l1-.6v4.4" stroke="#f0f0f0" stroke-width=".8" fill="none"/></svg>
<div class="a" style="left:971.3px;top:530px;width:.7px;height:19px;background:#6a685f"></div>


</body></html>
